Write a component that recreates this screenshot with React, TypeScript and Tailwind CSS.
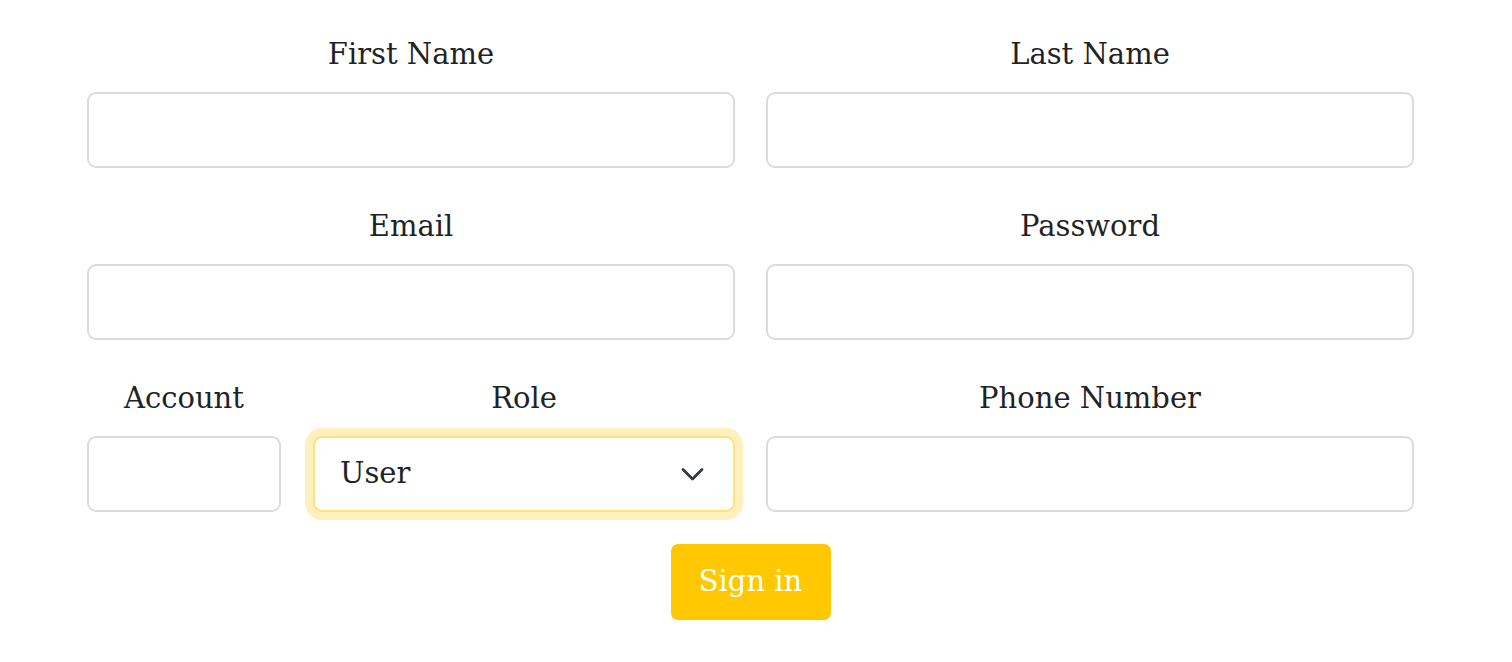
const font = { fontFamily: '"DejaVu Serif", "Liberation Serif", serif' };

function Field({ label, width }: { label: string; width: string }) {
    return (
        <div className={`flex flex-col ${width}`}>
            <label className="block text-center text-[29px] leading-[44px] text-[#1f2326] mb-[16px]">{label}</label>
            <input className="h-[76px] w-full rounded-[9px] border-2 border-[#d9dde1] bg-white px-[25px] outline-none" />
        </div>
    );
}

export default function App() {
    return (
        <div className="min-h-[662px] w-full bg-white pl-[87px] pt-[32px]" style={font}>
            <div className="flex w-[1327px] flex-col">
                <div className="flex gap-[31px]">
                    <Field label="First Name" width="w-[648px]" />
                    <Field label="Last Name" width="w-[648px]" />
                </div>
                <div className="mt-[36px] flex gap-[31px]">
                    <Field label="Email" width="w-[648px]" />
                    <Field label="Password" width="w-[648px]" />
                </div>
                <div className="mt-[36px] flex gap-[31px]">
                    <div className="flex w-[648px] gap-[32px]">
                        <Field label="Account" width="w-[194px]" />
                        <div className="flex w-[422px] flex-col">
                            <label className="block text-center text-[29px] leading-[44px] text-[#1f2326] mb-[16px]">Role</label>
                            <div className="flex h-[76px] w-full items-center rounded-[9px] border-2 border-[#ffe27a] bg-white pl-[25px] pr-[29px] shadow-[0_0_0_8px_#fff0bd]">
                                <span className="flex-1 text-[29px] text-[#1f2326]">User</span>
                                <svg width="23" height="15" viewBox="0 0 23 15" fill="none">
                                    <path d="M2 2.5 L11.5 12 L21 2.5" stroke="#343a40" strokeWidth="2.8" strokeLinecap="round" strokeLinejoin="round" />
                                </svg>
                            </div>
                        </div>
                    </div>
                    <Field label="Phone Number" width="w-[648px]" />
                </div>
                <div className="mt-[32px] flex justify-center">
                    <button className="h-[76px] w-[160px] rounded-[7px] bg-[#ffc800] text-[29px] text-white">Sign in</button>
                </div>
            </div>
        </div>
    );
}
